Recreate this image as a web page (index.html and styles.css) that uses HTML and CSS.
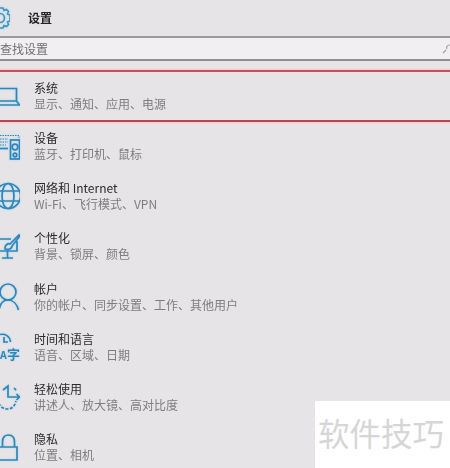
FILE: index.html
```html
<!DOCTYPE html>
<html lang="zh">
<head>
<meta charset="utf-8">
<title>设置</title>
<link rel="stylesheet" href="styles.css">
</head>
<body>
<div class="page">
  <header class="head">
    <svg class="gear" viewBox="0 0 10 24"><path d="M0 2 H3 L4 4.500 L6.500 3.500 L8.500 5.500 L7.500 8 L10 9 V15 L7.500 16 L8.500 18.500 L6.500 20.500 L4 19.500 L3 22 H0"/><circle cx="0" cy="12" r="4.500"/></svg>
    <h1 class="head-title">设置</h1>
  </header>
  <div class="search"><span class="search-text">查找设置</span><svg class="search-icon" viewBox="0 0 8 14"><path d="M1 11 L4 8"/><path d="M5 7 C4 5 5 3 8 3"/></svg></div>
  <ul class="list">
    <li class="row row-selected">
      <svg class="icon" viewBox="0 0 20 28"><path d="M0 6.500 H16.500 V19 H0 M0 23 H19.500 L16.500 19"/></svg>
      <div class="text"><div class="name">系统</div><div class="sub">显示、通知、应用、电源</div></div>
    </li>
    <li class="row">
      <svg class="icon" viewBox="0 0 20 28"><path class="thin" d="M0 3.500 H19 V8"/><path class="thin" d="M0 7 H8 M0 10 H8 M0 13 H6"/><path d="M0 16.500 H8"/><rect x="10.500" y="8" width="9" height="19"/><circle cx="15" cy="15" r="2.800"/><circle cx="15" cy="23" r="1.800"/></svg>
      <div class="text"><div class="name">设备</div><div class="sub">蓝牙、打印机、鼠标</div></div>
    </li>
    <li class="row">
      <svg class="icon" viewBox="0 0 20 28"><circle cx="8" cy="14" r="12.500"/><ellipse cx="8" cy="14" rx="6" ry="12.500"/><path d="M-5 9 H20 M-5 19 H20"/></svg>
      <div class="text"><div class="name">网络和 Internet</div><div class="sub">Wi-Fi、飞行模式、VPN</div></div>
    </li>
    <li class="row">
      <svg class="icon" viewBox="0 0 20 28"><path d="M11 7 H0 M0 19 H17 V9 M7.500 19 V26 M2 26 H13"/><path d="M5 16 C5 13 8 11 10 12 L19 3 L20 4 L12 14 C12 17 8 18 5 17Z"/></svg>
      <div class="text"><div class="name">个性化</div><div class="sub">背景、锁屏、颜色</div></div>
    </li>
    <li class="row">
      <svg class="icon" viewBox="0 0 20 28"><circle cx="8" cy="9" r="8"/><path d="M-1 27 C0 21 3 17 8 17 C13 17 17 21 18.500 27"/></svg>
      <div class="text"><div class="name">帐户</div><div class="sub">你的帐户、同步设置、工作、其他用户</div></div>
    </li>
    <li class="row">
      <svg class="icon icon-open" viewBox="0 0 20 28"><path d="M0 1.500 C5 0.500 10 3 10.500 9 M4 4 V9 H8"/><text class="glyph glyph-a" x="0" y="26">A</text><text class="glyph" x="7" y="26">字</text></svg>
      <div class="text"><div class="name">时间和语言</div><div class="sub">语音、区域、日期</div></div>
    </li>
    <li class="row">
      <svg class="icon" viewBox="0 0 20 28"><path d="M3 7 L8 3 V14 H19.500 M16.500 11 L19.500 14 L16.500 17"/><path class="dash" d="M-3 16 C-1 23 3 26 7 26 C12 26 15 23 16 18 M14 5 L17 8"/></svg>
      <div class="text"><div class="name">轻松使用</div><div class="sub">讲述人、放大镜、高对比度</div></div>
    </li>
    <li class="row">
      <svg class="icon" viewBox="0 0 20 28"><path d="M2.500 14 V9 C2.500 4 5 2 8.500 2 C12 2 14.500 4 14.500 9 V14"/><path d="M0 14 H17 V27 H0"/></svg>
      <div class="text"><div class="name">隐私</div><div class="sub">位置、相机</div></div>
    </li>
  </ul>
  <div class="mark">软件技巧</div>
</div>
</body>
</html>
```
FILE: styles.css
```css
* { box-sizing: border-box; margin: 0; padding: 0; }
html, body { width: 450px; height: 468px; overflow: hidden; }
body { background: #e6e4e6; font-family: "Noto Sans CJK SC", "Noto Sans", sans-serif; color: #2b2b2b; }
.page { position: relative; width: 450px; height: 468px; overflow: hidden; filter: blur(0.35px); }
.head { height: 36px; display: flex; align-items: center; gap: 18px; }
.gear { width: 10px; height: 24px; fill: none; stroke: #3d93c4; stroke-width: 1.6; flex: none; filter: drop-shadow(0 0 1px #a9d8f0); }
.head-title { font-size: 12px; font-weight: 700; line-height: 16px; color: #222; }
.search { height: 25px; background: #f1eff1; border-top: 2px solid #9a9a9a; border-bottom: 2px solid #8f8f8f; display: flex; align-items: center; justify-content: space-between; }
.search-text { font-size: 12px; line-height: 16px; color: #6f6f6f; }
.search-icon { width: 8px; height: 14px; fill: none; stroke: #a0a0a0; stroke-width: 1.2; }
.list { list-style: none; margin-top: 9px; }
.row { height: 50.200px; display: flex; align-items: center; gap: 14px; }
.row-selected { height: 52px; border-top: 2px solid #c0535a; border-bottom: 2px solid #b5484f; box-shadow: 0 0 1px 1px #f6c9cb; margin-bottom: -1px; }
.icon { width: 20px; height: 28px; flex: none; fill: none; stroke: #2f85b8; stroke-width: 1.7; overflow: hidden; filter: drop-shadow(0 0 1px #a9d8f0); }
.icon-open { overflow: visible; }
.thin { stroke-width: 1; stroke-dasharray: 1.500 1; }
.dash { stroke-dasharray: 3 1.500; }
.glyph { fill: #2f85b8; stroke: none; font-size: 13px; font-weight: 700; }
.glyph-a { font-size: 10.500px; }
.text { display: flex; flex-direction: column; }
.name { font-size: 12px; line-height: 16px; color: #2b2b2b; }
.sub { font-size: 12px; line-height: 16px; color: #7d7d7d; }
.mark { position: absolute; right: 0; bottom: 0; width: 135px; height: 67px; background: #fff; color: #d6d6d6; font-size: 31.500px; line-height: 40px; padding: 11px 0 0 3px; white-space: nowrap; }
```
